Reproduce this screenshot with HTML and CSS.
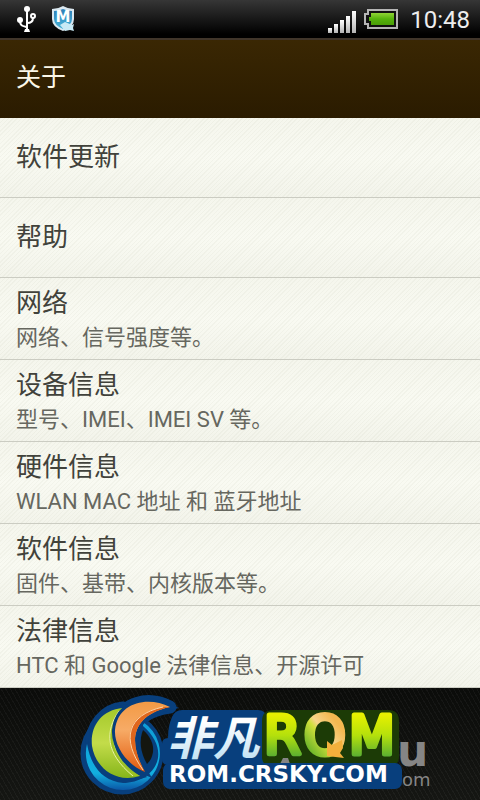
FILE: index.html
```html
<!DOCTYPE html>
<html lang="zh-CN">

<head>
  <meta charset="utf-8">
  <meta name="viewport" content="width=device-width, initial-scale=1">
  <title>关于</title>
  <link rel="stylesheet" href="styles.css">
</head>

<body>
  <div class="status-bar">
    <svg class="icon-usb" viewBox="0 0 20 28" width="20" height="28">
      <g fill="none" stroke="#fff" stroke-width="2">
        <path d="M11 4v21"/>
        <path d="M4 16c0 5 3 5 7 6"/>
        <path d="M11 18c4 0 6-2 6-5"/>
        <circle cx="17" cy="11" r="2"/>
      </g>
      <circle cx="11" cy="4" r="3" fill="#fff"/>
      <circle cx="4" cy="15" r="3" fill="#fff"/>
      <path d="M9 24h4l1 3H8z" fill="#fff"/>
    </svg>
    <svg class="icon-shield" viewBox="0 0 24 28" width="24" height="28">
      <defs>
        <linearGradient id="shield" x1="0" y1="0" x2="0" y2="1">
          <stop offset="0" stop-color="#2f7fb8"/>
          <stop offset="1" stop-color="#48b4d8"/>
        </linearGradient>
      </defs>
      <path d="M1 4q6 0 11-3 5 3 11 3v10q0 8-11 12Q1 22 1 14z" fill="#dbe8f0"/>
      <path d="M3 6q5 0 9-2 4 2 9 2v8q0 6-9 10-9-4-9-10z" fill="url(#shield)"/>
      <text x="12" y="17" class="shield-letter" text-anchor="middle">M</text>
      <path d="M9 20l5-3 7 3 2-1-1 4 1 3-4-1-5 1z" fill="#c9eaf5"/>
    </svg>
    <svg class="icon-signal" viewBox="0 0 28 22" width="28" height="22">
      <defs>
        <linearGradient id="bars" x1="0" y1="0" x2="0" y2="1">
          <stop offset="0" stop-color="#fff"/>
          <stop offset="1" stop-color="#b4b4b4"/>
        </linearGradient>
      </defs>
      <g fill="url(#bars)">
        <rect x="0" y="17" width="4" height="5"/>
        <rect x="6" y="13" width="4" height="9"/>
        <rect x="12" y="9" width="4" height="13"/>
        <rect x="18" y="5" width="4" height="17"/>
        <rect x="24" y="0" width="4" height="22"/>
      </g>
    </svg>
    <svg class="icon-battery" viewBox="0 0 34 20" width="34" height="20">
      <defs>
        <linearGradient id="charge" x1="0" y1="0" x2="0" y2="1">
          <stop offset="0" stop-color="#8fd435"/>
          <stop offset=".5" stop-color="#55b30c"/>
          <stop offset="1" stop-color="#4a9e08"/>
        </linearGradient>
      </defs>
      <path d="M4 1h29v18H4v-4H1V5h3z" fill="#111" stroke="#b5b5b5" stroke-width="2"/>
      <path d="M7 4h23v12H7v-4H5V8h2z" fill="url(#charge)"/>
    </svg>
    <span class="clock">10:48</span>
  </div>

  <header class="header">
    <h1>关于</h1>
  </header>

  <main class="list">
    <a class="item single" href="#"><span class="title">软件更新</span></a>
    <a class="item single" href="#"><span class="title">帮助</span></a>
    <a class="item" href="#">
      <span class="title">网络</span>
      <span class="desc">网络、信号强度等。</span>
    </a>
    <a class="item" href="#">
      <span class="title">设备信息</span>
      <span class="desc">型号、IMEI、IMEI SV 等。</span>
    </a>
    <a class="item" href="#">
      <span class="title">硬件信息</span>
      <span class="desc">WLAN MAC 地址 和 蓝牙地址</span>
    </a>
    <a class="item" href="#">
      <span class="title">软件信息</span>
      <span class="desc">固件、基带、内核版本等。</span>
    </a>
    <a class="item" href="#">
      <span class="title">法律信息</span>
      <span class="desc">HTC 和 Google 法律信息、开源许可</span>
    </a>
  </main>

  <footer class="footer">
    <svg class="logo" viewBox="0 0 480 112">
      <defs>
        <linearGradient id="ring" x1="0" y1="0" x2="0" y2="1">
          <stop offset="0" stop-color="#0d9bd8"/>
          <stop offset=".75" stop-color="#12b0e0"/>
          <stop offset="1" stop-color="#0b57a6"/>
        </linearGradient>
        <linearGradient id="green" x1="0" y1="0" x2="0" y2="1">
          <stop offset="0" stop-color="#a4c92a"/>
          <stop offset=".5" stop-color="#c3dc4a"/>
          <stop offset="1" stop-color="#86b51a"/>
        </linearGradient>
        <linearGradient id="orange" x1="0" y1="0" x2="0" y2="1">
          <stop offset="0" stop-color="#f39a45"/>
          <stop offset=".4" stop-color="#f7ab66"/>
          <stop offset="1" stop-color="#e2590d"/>
        </linearGradient>
        <linearGradient id="ice" x1="0" y1="0" x2="0" y2="1">
          <stop offset=".3" stop-color="#fff"/>
          <stop offset="1" stop-color="#b5dcf2"/>
        </linearGradient>
        <linearGradient id="lime" gradientUnits="userSpaceOnUse" x1="0" y1="27" x2="0" y2="68">
          <stop offset="0" stop-color="#e6f000"/>
          <stop offset=".5" stop-color="#b4e00c"/>
          <stop offset="1" stop-color="#5cb030"/>
        </linearGradient>
        <linearGradient id="turn" gradientUnits="userSpaceOnUse" x1="308" y1="60" x2="338" y2="36">
          <stop offset="0" stop-color="#6fb62a"/>
          <stop offset=".45" stop-color="#cfe03a"/>
          <stop offset=".6" stop-color="#f7d489"/>
          <stop offset="1" stop-color="#f3b850"/>
        </linearGradient>
      </defs>

      <g class="watermark">
        <path d="M280 75l3-12h4l3 12z"/>
        <text x="397" y="78" class="mark-big">u</text>
        <text x="402" y="98" class="mark-small">om</text>
      </g>

      <!-- round emblem -->
      <g fill="#083f7d" stroke="#083f7d" stroke-width="13" stroke-linejoin="round">
        <circle cx="122" cy="65" r="35"/>
        <path d="M123 20C104 22 91 38 92 58c10 0 23-8 31-38z"/>
        <path d="M170 19C148 8 122 14 116 38l16 8c2-12 14-24 38-27z"/>
      </g>
      <path d="M143 42c7 6 11 14 10 22-1 6-3 9-6 12-7-12-8-24-4-34z" fill="#14160f"/>
      <path d="M143 34A37 37 0 1 1 87 56c4 23 16 37 36 39 30 0 51-30 20-57z" fill="url(#ring)"/>
      <path d="M123 20C100 22 90 40 92 58c3 20 22 38 48 30C120 76 102 52 123 20z" fill="url(#green)" stroke="#083f7d" stroke-width="6" paint-order="stroke"/>
      <path d="M119 23c-14 20-14 42 14 65h7C118 78 102 52 123 20z" fill="#9dc224"/>
      <path d="M119 23c-14 20-14 42 14 65" fill="none" stroke="#e9f2a8"/>
      <path d="M170 19C148 8 118 14 115 42c-1 16 12 35 30 42-16-28-16-56 25-65z" fill="url(#orange)" stroke="#083f7d" stroke-width="6" paint-order="stroke"/>
      <path d="M165 19c-38 6-46 32-20 65-16-28-16-56 25-65z" fill="#e0661c"/>
      <path d="M163 19c-36 8-42 32-20 63" fill="none" stroke="#fbd3a6"/>

      <!-- plates under the lettering -->
      <path d="M182 22h76q8 0 8 8v47h-98q-6 0-6-7V56q0-6 6-6 0-12 4-21 3-7 10-7z" fill="#083f7d"/>
      <path d="M274 22h114q11 0 11 11v36q0 8-8 8H270q-8 0-8-8V33q0-11 12-11z" fill="#1c3b06"/>
      <path d="M280 76l3-6h5l2 6z" class="watermark"/>
      <rect x="163" y="75" width="239" height="26" rx="7" fill="#083f7d"/>

      <text x="167" y="67" class="brand" fill="url(#ice)">非凡</text>
      <g class="rom" fill="url(#lime)" stroke="url(#lime)">
        <text x="264" y="66">R</text>
        <text x="304" y="66" fill="url(#turn)" stroke="url(#turn)">O</text>
        <text x="349" y="66">M</text>
      </g>
      <path d="M327 53l5 4 10-5 1 8-3 5 4 5-17-2z" fill="#f3b03c"/>
      <text x="169" y="94" class="site" fill="#fff">ROM.CRSKY.COM</text>
    </svg>
  </footer>
</body>

</html>
```

FILE: styles.css
```css
body {
    margin: 0;
    min-height: 100vh;
    display: flex;
    flex-direction: column;
    font-family: Roboto, "Noto Sans CJK SC", sans-serif;
    background-color: #11120f;
}
.status-bar {
    display: flex;
    align-items: center;
    height: 38px;
    padding: 0 10px 0 16px;
    background: linear-gradient(#363636, #000 90%);
}
.icon-shield {
    margin-left: 15px;
}
.shield-letter {
    font: bold 15px "DejaVu Sans", sans-serif;
    fill: #fff;
}
.icon-signal {
    margin-left: auto;
    margin-top: 6px;
}
.icon-battery {
    margin-left: 8px;
}
.clock {
    margin-left: 12px;
    padding-top: 2px;
    font-size: 24px;
    line-height: 36px;
    color: #eee;
}
.header {
    box-sizing: border-box;
    height: 80px;
    padding: 0 16px;
    border-top: 2px solid #40352a;
    background: linear-gradient(#3a2703, #2a1b00);
}
h1 {
    margin: 0;
    font-size: 25px;
    font-weight: normal;
    line-height: 76px;
    color: #fbf7e8;
}
.item {
    box-sizing: border-box;
    display: flex;
    flex-direction: column;
    justify-content: center;
    height: 82px;
    padding: 2px 16px 0;
    border-bottom: 1px solid #cbccc2;
    background:
        repeating-linear-gradient(135deg, rgba(120, 125, 90, 0.05) 0 1px, transparent 1px 3px),
        linear-gradient(#f5f6ed, #f9faf2 50%, #f3f4eb);
    text-decoration: none;
}
.single {
    height: 80px;
    padding: 0 16px 2px;
}
.title {
    font-size: 26px;
    line-height: 36px;
    color: #41423b;
}
.desc {
    font-size: 22px;
    line-height: 34px;
    color: #66675f;
}
.footer {
    flex: 1;
    background:
        repeating-linear-gradient(60deg, rgba(255, 255, 255, 0.04) 0 1px, transparent 1px 4px),
        linear-gradient(#0b0c0a, #151613);
}
.logo {
    display: block;
    width: 100%;
}
.watermark {
    fill: #858585;
    font-family: "DejaVu Sans", sans-serif;
}
.mark-big {
    font-size: 44px;
    font-weight: bold;
}
.mark-small {
    font-size: 18px;
}
.brand {
    font: italic bold 46px "Noto Sans CJK SC", sans-serif;
}
.rom {
    font: 53px "DejaVu Sans", sans-serif;
    stroke-width: 5px;
    stroke-linejoin: round;
}
.site {
    font: bold 23px "DejaVu Sans", sans-serif;
}
```
